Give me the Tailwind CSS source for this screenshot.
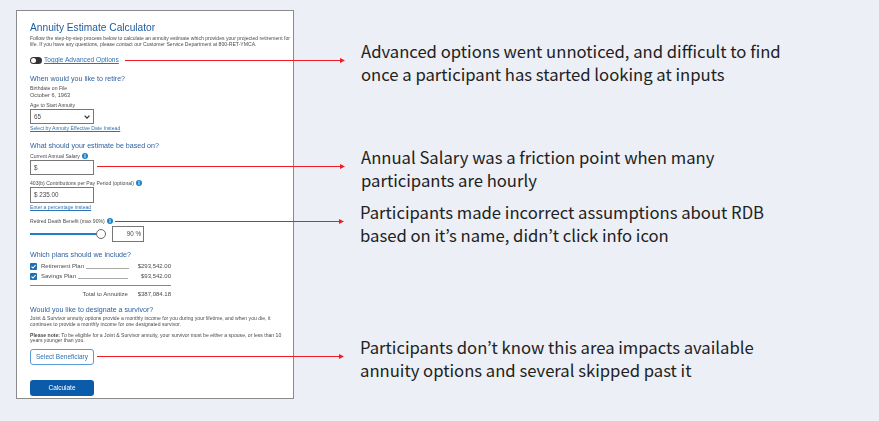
<!DOCTYPE html>
<html lang="en">
  <head>
    <meta charset="UTF-8" />
    <title>Annuity Estimate Calculator</title>
    <script src="https://cdn.jsdelivr.net/npm/@tailwindcss/browser@4"></script>
  </head>
  <body class="bg-[#eceff5] font-['Liberation_Sans',Arial,sans-serif]">
    <div class="relative w-[879px] h-[421px] overflow-hidden pt-[10px] pl-[16px]">
      <!-- Calculator card -->
      <main class="w-[278px] h-[389px] bg-white border border-[#8a8a8a] pt-[11px] px-[13px] text-[#4a4a4a]">
        <div class="blur-[0.3px]">
        <h1 class="text-[10.2px] leading-[12px] text-[#1f5a9e]">Annuity Estimate Calculator</h1>
        <p class="text-[5.1px] leading-[5.7px] h-[12px] mt-[2px] w-[262px]">Follow the step-by-step process below to calculate an annuity estimate which provides your projected retirement for life. If you have any questions, please contact our Customer Service Department at 800-RET-YMCA.</p>

        <div class="flex items-center gap-[2px] mt-[8px] h-[8px]">
          <span class="flex items-center w-[12px] h-[7px] rounded-full bg-[#333] pl-[1px]"><span class="w-[5px] h-[5px] rounded-full bg-white"></span></span>
          <a class="text-[6.6px] text-[#2f73b5] underline">Toggle Advanced Options</a>
        </div>

        <h2 class="text-[7.1px] leading-[10px] text-[#2d5f9e] mt-[10px]">When would you like to retire?</h2>
        <div class="text-[5.1px] leading-[6px] mt-[1px]">Birthdate on File</div>
        <div class="text-[5.6px] leading-[7px] mt-[1px]">October 6, 1963</div>
        <div class="text-[5.1px] leading-[6px] mt-[3px]">Age to Start Annuity</div>
        <div class="flex items-center justify-between w-[64px] h-[15px] mt-[1px] border border-[#777] px-[3px] text-[6.3px]">
          <span>65</span>
          <svg class="w-[6px] h-[4px]" viewBox="0 0 6 4"><path d="M.6.6 3 3.2 5.4.6" fill="none" stroke="#333" stroke-width="1.2" /></svg>
        </div>
        <a class="block text-[5.1px] leading-[6px] text-[#2f73b5] underline mt-[1px]">Select by Annuity Effective Date Instead</a>

        <h2 class="text-[7.1px] leading-[10px] text-[#2d5f9e] mt-[10px]">What should your estimate be based on?</h2>
        <div class="flex items-center gap-[2px] text-[5.1px] leading-[6px] mt-[2px]">Current Annual Salary
          <svg class="w-[6px] h-[6px]" viewBox="0 0 6 6"><circle cx="3" cy="3" r="3" fill="#1b83c5" /><rect x="2.5" y="2.5" width="1" height="2.2" fill="#fff" /><rect x="2.5" y="1.1" width="1" height="1" fill="#fff" /></svg>
        </div>
        <div class="flex items-center w-[64px] h-[15px] mt-[1px] border border-[#777] px-[3px] text-[6.3px]">$</div>
        <div class="flex items-center gap-[2px] text-[5.1px] leading-[6px] mt-[5px]">403(b) Contributions per Pay Period (optional)
          <svg class="w-[6px] h-[6px]" viewBox="0 0 6 6"><circle cx="3" cy="3" r="3" fill="#1b83c5" /><rect x="2.5" y="2.5" width="1" height="2.2" fill="#fff" /><rect x="2.5" y="1.1" width="1" height="1" fill="#fff" /></svg>
        </div>
        <div class="flex items-center w-[64px] h-[16px] mt-[1px] border border-[#777] px-[3px] text-[6.3px]">$ 235.00</div>
        <a class="block text-[5.1px] leading-[6px] text-[#2f73b5] underline mt-[1px]">Enter a percentage instead</a>
        <div class="flex items-center gap-[2px] text-[5.1px] leading-[6px] mt-[8px]">Retired Death Benefit (max 90%)
          <svg class="w-[6px] h-[6px]" viewBox="0 0 6 6"><circle cx="3" cy="3" r="3" fill="#1b83c5" /><rect x="2.5" y="2.5" width="1" height="2.2" fill="#fff" /><rect x="2.5" y="1.1" width="1" height="1" fill="#fff" /></svg>
        </div>
        <div class="flex items-center mt-[2px]">
          <span class="w-[66px] h-[2px] bg-[#1b83c5]"></span>
          <span class="w-[10px] h-[10px] rounded-full border border-[#666] bg-white"></span>
          <span class="flex items-center justify-end w-[32px] h-[16px] ml-[6px] border border-[#777] pr-[2px] text-[6.3px]">90 %</span>
        </div>

        <h2 class="text-[7.1px] leading-[10px] text-[#2d5f9e] mt-[8px]">Which plans should we include?</h2>
        <div class="flex items-center w-[141px] h-[8px] mt-[2px] text-[6px]">
          <svg class="w-[7px] h-[7px]" viewBox="0 0 7 7"><rect width="7" height="7" rx="1" fill="#1b6fb5" /><path d="M1.5 3.6 3 5l2.6-3" fill="none" stroke="#fff" stroke-width="1.1" /></svg>
          <span class="ml-[4px]">Retirement Plan</span>
          <span class="flex-1 h-px bg-[#aaa] ml-[2px] mr-[9px] mt-[4px]"></span>
          <span>$293,542.00</span>
        </div>
        <div class="flex items-center w-[141px] h-[8px] mt-[2px] text-[6px]">
          <svg class="w-[7px] h-[7px]" viewBox="0 0 7 7"><rect width="7" height="7" rx="1" fill="#1b6fb5" /><path d="M1.5 3.6 3 5l2.6-3" fill="none" stroke="#fff" stroke-width="1.1" /></svg>
          <span class="ml-[4px]">Savings Plan</span>
          <span class="flex-1 h-px bg-[#aaa] ml-[2px] mr-[13px] mt-[4px]"></span>
          <span>$93,542.00</span>
        </div>
        <div class="w-[141px] border-t border-[#888] mt-[5px] pt-[4px] text-[6px] leading-[8px] text-right">Total to Annuitize <span class="ml-[8px]">$387,084.18</span></div>

        <h2 class="text-[7.1px] leading-[10px] text-[#2d5f9e] mt-[7px]">Would you like to designate a survivor?</h2>
        <p class="text-[5.1px] leading-[5.7px] h-[12px] mt-px w-[250px]">Joint &amp; Survivor annuity options provide a monthly income for you during your lifetime, and when you die, it continues to provide a monthly income for one designated survivor.</p>
        <p class="text-[5.1px] leading-[5.7px] h-[12px] mt-[4.5px] w-[255px]"><b>Please note:</b> To be eligible for a Joint &amp; Survivor annuity, your survivor must be either a spouse, or less than 10 years younger than you.</p>
        <button class="block w-[64px] h-[16px] mt-[4.5px] rounded-[3px] border border-[#5a9bd5] text-[6.5px] text-[#2f73b5]">Select Beneficiary</button>
        <button class="block w-[64px] h-[16px] mt-[15px] rounded-[3px] bg-[#0a5cab] text-[6.5px] text-white">Calculate</button>
        </div>
      </main>

      <!-- Callout arrows -->
      <svg class="absolute left-0 top-0" width="879" height="421">
        <g stroke="#ee1c25" fill="#ee1c25" stroke-width="1">
          <path d="M125 60.5H341" /><path d="M345 60.5 340 58v5z" stroke="none" />
          <path d="M97 166.5H341" /><path d="M345 166.5 340 164v5z" stroke="none" />
          <path d="M115 221.5H340" /><path d="M344 221.5 339 219v5z" stroke="none" />
          <path d="M97 356.5H340" /><path d="M344 356.5 339 354v5z" stroke="none" />
        </g>
      </svg>

      <!-- Callout notes -->
      <p class="absolute left-[361px] top-[40px] text-[16.67px] leading-[23px] text-[#222] font-['Noto_Sans_CJK_JP',sans-serif] whitespace-nowrap">Advanced options went unnoticed, and difficult to find<br />once a participant has started looking at inputs</p>
      <p class="absolute left-[361px] top-[146px] text-[16.67px] leading-[23px] text-[#222] font-['Noto_Sans_CJK_JP',sans-serif] whitespace-nowrap">Annual Salary was a friction point when many<br />participants are hourly</p>
      <p class="absolute left-[360px] top-[201px] text-[16.67px] leading-[23px] text-[#222] font-['Noto_Sans_CJK_JP',sans-serif] whitespace-nowrap">Participants made incorrect assumptions about RDB<br />based on it’s name, didn’t click info icon</p>
      <p class="absolute left-[360px] top-[336px] text-[16.67px] leading-[23px] text-[#222] font-['Noto_Sans_CJK_JP',sans-serif] whitespace-nowrap">Participants don’t know this area impacts available<br />annuity options and several skipped past it</p>
    </div>
  </body>
</html>
